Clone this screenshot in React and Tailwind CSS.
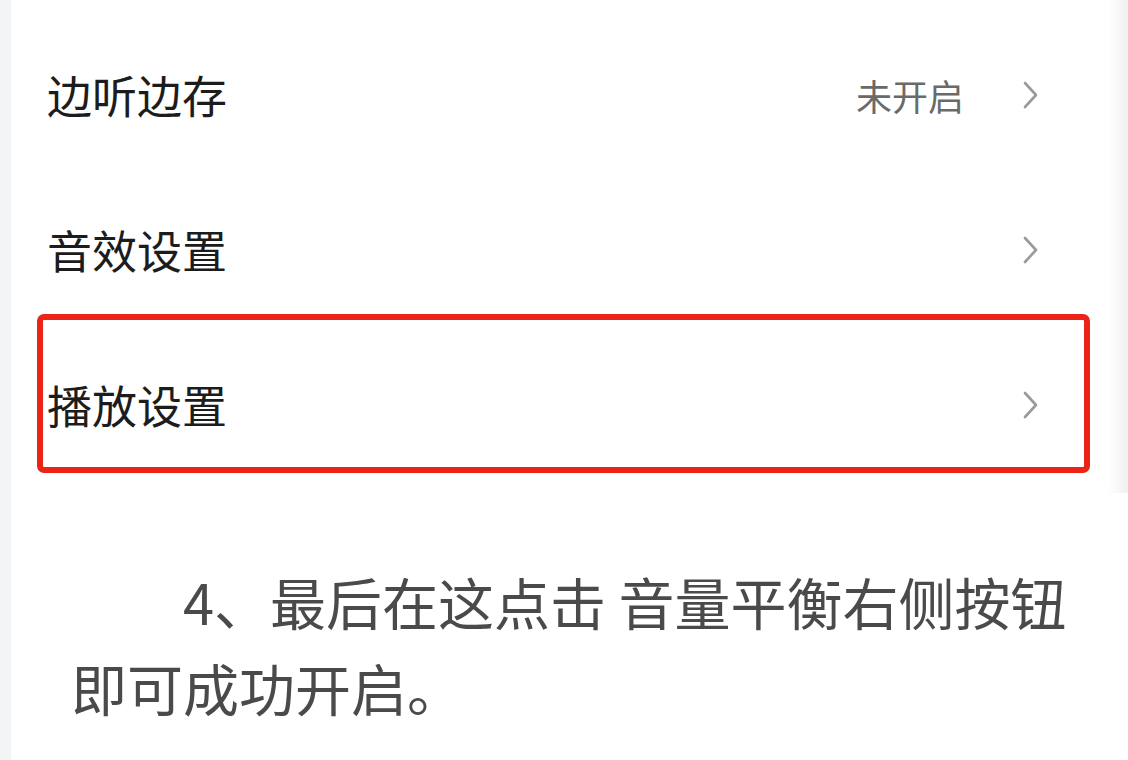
import React from "react";

const Chevron = () => (
  <svg width="18" height="28" viewBox="0 0 18 28" fill="none" className="shrink-0">
    <polyline points="3,2 14,14 3,26" stroke="#9a9a9a" strokeWidth="2.6" strokeLinecap="round" strokeLinejoin="round" />
  </svg>
);

const Row = ({ title, value, boxed }) => (
  <div className="relative flex items-center h-[155px] pl-[36px] pr-[68px]">
    <span className="text-[45px] leading-none text-[#1c1c1c]">{title}</span>
    <div className="flex-1" />
    {value && <span className="text-[36px] leading-none text-[#6a6a6a] mr-[58px]">{value}</span>}
    <Chevron />
    {boxed && (
      <div className="absolute left-[26px] top-[-13px] w-[1053px] h-[159px] border-[6px] border-[#ec2418] rounded-[7px]" />
    )}
  </div>
);

export default function App() {
  return (
    <div
      className="flex w-[1128px] h-[760px] bg-white overflow-hidden"
      style={{ fontFamily: '"Noto Sans CJK SC", "Noto Sans", sans-serif' }}
    >
      <div className="w-[11px] shrink-0 bg-[#f3f4f6]" />
      <div className="flex flex-col flex-1">
        <div className="flex h-[493px]">
          <div className="w-[1097px] pt-[17px] bg-white">
            <Row title="边听边存" value="未开启" />
            <Row title="音效设置" />
            <Row title="播放设置" boxed />
          </div>
          <div className="flex-1 bg-linear-to-r from-white to-[#f0f0f2]" />
        </div>
        <p className="mt-[65px] pl-[60px] w-[1083px] text-[56px] leading-[86px] text-[#4a4a4a] indent-[112px]">
          4、最后在这点击 音量平衡右侧按钮即可成功开启。
        </p>
      </div>
    </div>
  );
}
